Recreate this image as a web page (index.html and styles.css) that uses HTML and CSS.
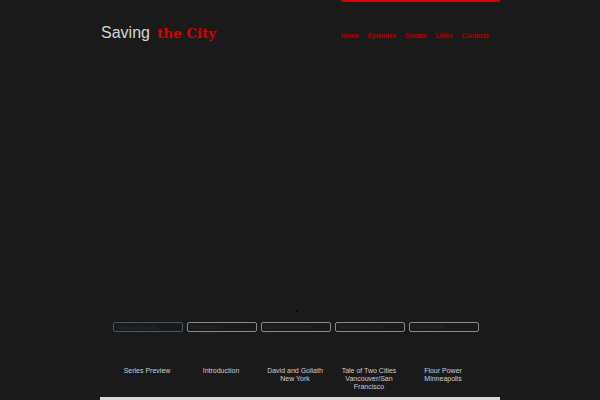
FILE: index.html
```html
<!DOCTYPE html>
<html>
<head>
<meta charset="utf-8">
<link rel="stylesheet" href="styles.css">
</head>
<body>
<div class="page">
  <header class="header">
    <div class="logo"><span class="saving">Saving</span><span class="city">the City</span></div>
    <div class="navwrap">
      <div class="redbar"></div>
      <nav class="nav">
        <a>Home</a><a>Episodes</a><a>Donate</a><a>Links</a><a>Contacts</a>
      </nav>
    </div>
  </header>
  <div class="stage">
    <span class="dot"></span>
  </div>
  <div class="thumbs">
    <div class="thumb active">Series Preview</div>
    <div class="thumb">Introduction</div>
    <div class="thumb">David and Goliath</div>
    <div class="thumb">Tale of Two Cities</div>
    <div class="thumb">Flour Power</div>
  </div>
  <div class="labels">
    <div class="label">Series Preview</div>
    <div class="label">Introduction</div>
    <div class="label">David and Goliath<br>New York</div>
    <div class="label">Tale of Two Cities<br>Vancouver/San<br>Francisco</div>
    <div class="label">Flour Power<br>Minneapolis</div>
  </div>
  <div class="footerbar"></div>
</div>
</body>
</html>
```
FILE: styles.css
```css
html, body {
  margin: 0;
  padding: 0;
  background: #1a1a1a;
  font-family: "Liberation Sans", Arial, sans-serif;
  height: 100%;
  overflow: hidden;
}
.page {
  width: 400px;
  margin: 0 auto;
}
.header {
  display: flex;
  justify-content: space-between;
  height: 60px;
}
.logo {
  padding: 24px 0 0 1px;
  display: flex;
  align-items: baseline;
}
.saving {
  color: #d6d6d6;
  font-size: 16px;
}
.city {
  color: #d40000;
  font-family: "DejaVu Serif", serif;
  font-weight: bold;
  font-size: 13.5px;
  margin-left: 7px;
}
.navwrap {
  width: 159px;
}
.redbar {
  height: 2px;
  background: #d00000;
}
.nav {
  display: flex;
  gap: 9px;
  padding-top: 30px;
  font-size: 6.4px;
  font-weight: bold;
}
.nav a {
  color: #b00000;
}
.stage {
  height: 262px;
  position: relative;
}
.dot {
  position: absolute;
  left: 196px;
  top: 250px;
  width: 2px;
  height: 2px;
  background: #000;
  border-radius: 50%;
}
.thumbs {
  display: flex;
  gap: 4px;
  padding-left: 13px;
}
.thumb {
  width: 70px;
  height: 10px;
  box-sizing: border-box;
  border: 1px solid #8a8a8a;
  border-radius: 2px;
  font-size: 6px;
  color: #2a2a2a;
  line-height: 8px;
  padding-left: 2px;
  overflow: hidden;
  white-space: nowrap;
}
.thumb.active {
  border-color: #3d5a6e;
}
.labels {
  display: flex;
  padding: 35px 0 0 10px;
  height: 30px;
}
.label {
  width: 74px;
  text-align: center;
  font-size: 7px;
  line-height: 8px;
  color: #cfcfcf;
}
.footerbar {
  height: 3px;
  background: #d8d8d8;
}
```
